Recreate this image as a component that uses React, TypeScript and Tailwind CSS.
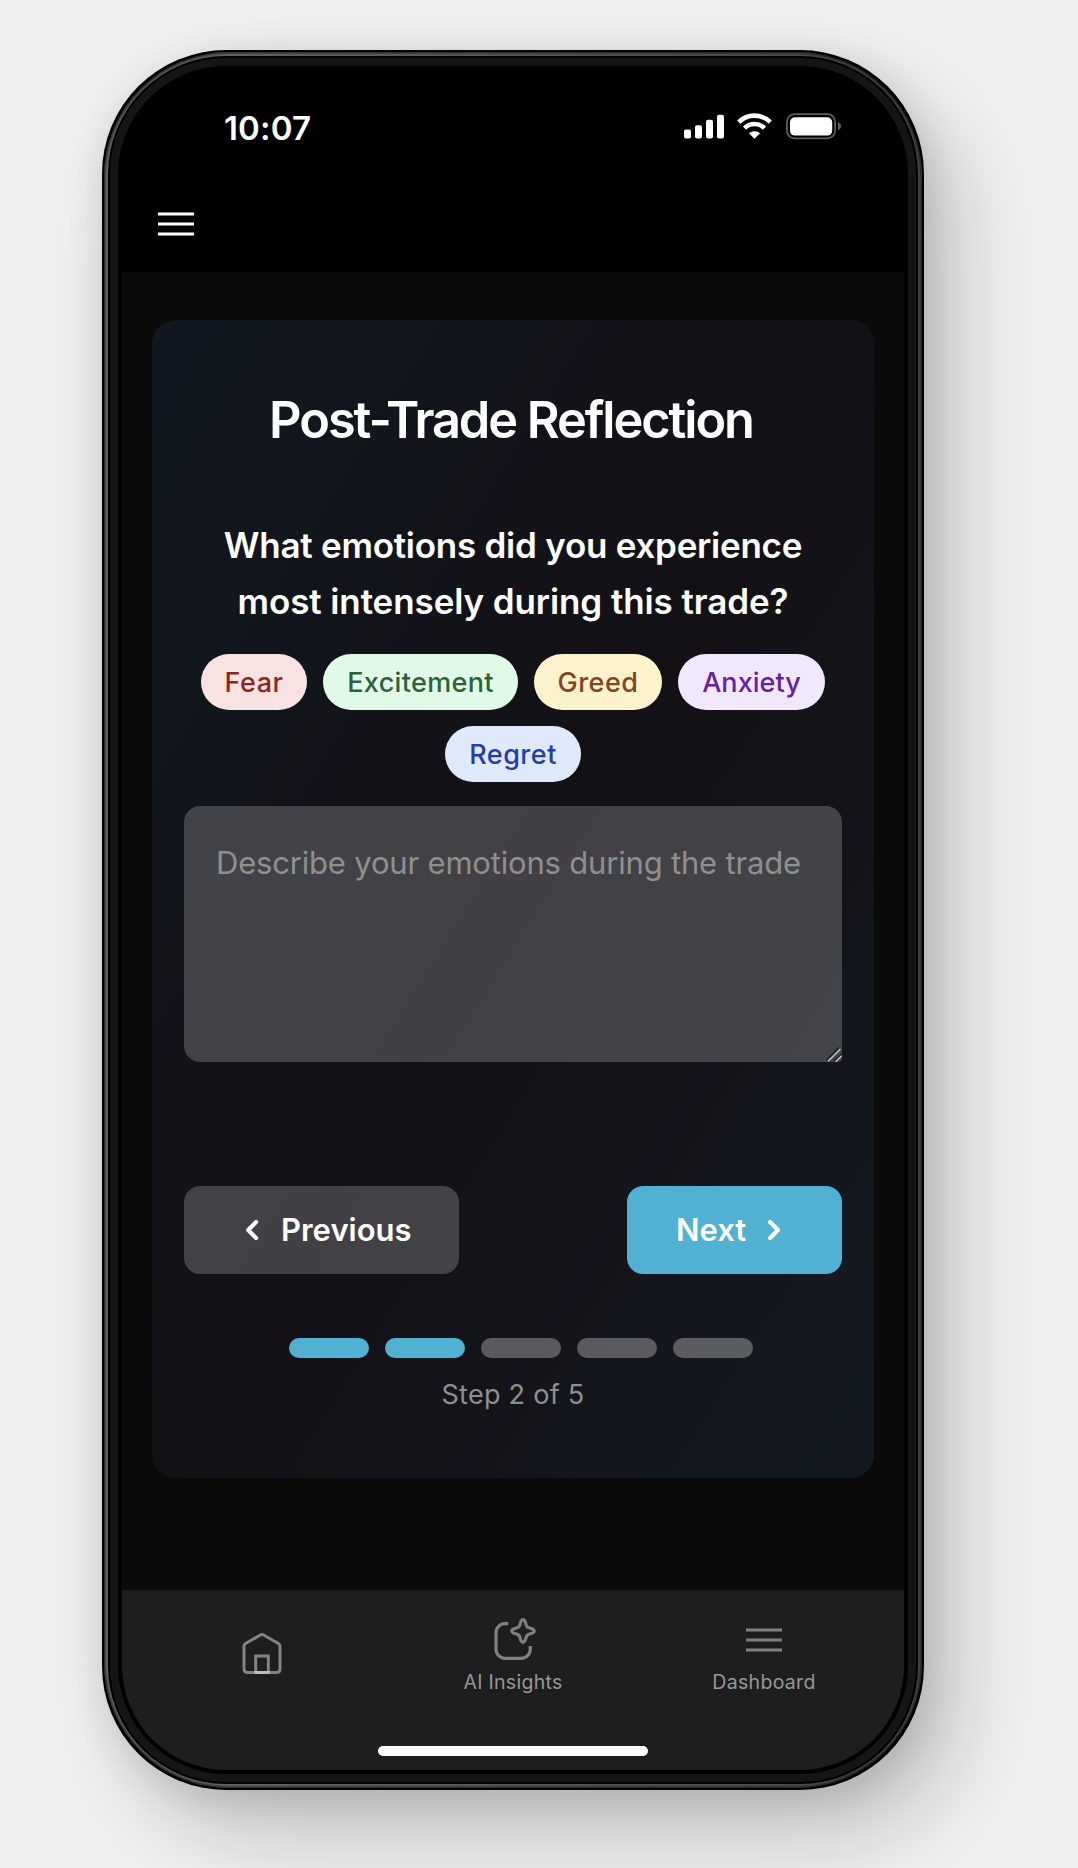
import type { ReactNode } from 'react';

const emotions = [
  { label: 'Fear', style: 'w-[106px] bg-[#f9e2e2] text-[#8e2620] tracking-[0.5px]' },
  { label: 'Excitement', style: 'w-[195px] bg-[#e1fae8] text-[#2c6339] tracking-[0.33px]' },
  { label: 'Greed', style: 'w-[128px] bg-[#fcf2cb] text-[#85431e] tracking-[0.5px]' },
  { label: 'Anxiety', style: 'w-[147px] bg-[#f2e8fd] text-[#6421a4] tracking-[0.05px]' },
  { label: 'Regret', style: 'w-[136px] bg-[#dee9fb] text-[#253eac] tracking-[0.5px]' },
];

const TOTAL_STEPS = 5;
const CURRENT_STEP = 2;

function MenuIcon({ className }: { className: string }) {
  return (
    <svg width="36" height="24" viewBox="0 0 36 24" stroke="currentColor" strokeWidth="3" className={className}>
      <path d="M0 2h36M0 12h36M0 22h36" />
    </svg>
  );
}

function HomeIcon() {
  return (
    <svg width="40" height="42" viewBox="0 0 40 42" fill="none" stroke="#fff" strokeOpacity="0.45" strokeWidth="3">
      <path
        d="M2 13.2c0-1.3.6-2 1.6-2.7L18.4 2c1.1-.7 2.1-.7 3.2 0l14.8 8.5c1 .7 1.6 1.4 1.6 2.7V36c0 2.200-1.300 3.400-3.400 3.400H5.400C3.300 39.400 2 38.200 2 36Z"
        strokeLinejoin="round"
      />
      <path d="M13.700 39.400V23h12.600v16.400Z" />
    </svg>
  );
}

function InsightsIcon() {
  return (
    <svg width="38" height="44" viewBox="0 0 38 44" fill="none" stroke="#7f7f7f" strokeWidth="3.2" className="overflow-visible">
      <path d="M14.300 6.700H11C6 6.700 2 10.700 2 15.700V32.300C2 37.300 6 41.300 11 41.300H27.300C32.300 41.300 36.300 37.300 36.300 32.300V29" />
      <path
        d="M27 4.300Q29 1.100 31 4.300L32.500 8.800Q33 10 34.200 10.500L38.700 12Q41.900 14 38.700 16L34.200 17.500Q33 18 32.500 19.200L31 23.700Q29 26.900 27 23.700L25.500 19.200Q25 18 23.800 17.500L19.300 16Q16.100 14 19.300 12L23.800 10.500Q25 10 25.500 8.800Z"
        strokeLinejoin="round"
      />
    </svg>
  );
}

function Chevron({ direction }: { direction: 'left' | 'right' }) {
  return (
    <svg width="40" height="40" viewBox="0 0 40 40" fill="none" stroke="currentColor" strokeWidth="4.2" strokeLinecap="round" strokeLinejoin="round">
      <path d={direction === 'left' ? 'M24.100 12l-7.900 8 7.900 8' : 'M16.100 12l7.900 8-7.900 8'} />
    </svg>
  );
}

function SignalIcon() {
  return (
    <svg width="40" height="26" viewBox="0 0 40 26" fill="#fff">
      <rect x="0" y="16.500" width="7" height="9" rx="2" />
      <rect x="11" y="12.300" width="7" height="13.200" rx="2" />
      <rect x="22" y="6.700" width="7" height="18.800" rx="2" />
      <rect x="33" y="1.800" width="7" height="23.700" rx="2" />
    </svg>
  );
}

function WifiIcon() {
  return (
    <svg width="35" height="26" viewBox="0 0 35 26" fill="none" stroke="#fff" strokeWidth="4.6">
      <path d="M1.700 9.100A22.600 22.600 0 0 1 33.300 9.100" />
      <path d="M7.500 15.100A14.400 14.400 0 0 1 27.500 15.100" />
      <path d="M17.500 25.700L11.900 20.300A8.300 8.300 0 0 1 23.100 20.300Z" fill="#fff" stroke="none" />
    </svg>
  );
}

function BatteryIcon() {
  return (
    <svg width="55" height="26" viewBox="0 0 55 26" fill="none" className="overflow-visible">
      <rect x="0.9" y="1.100" width="48.200" height="24.200" rx="7.600" stroke="#5e5e5e" strokeWidth="1.8" />
      <rect x="4" y="4.200" width="42.200" height="18.400" rx="5" fill="#fff" />
      <path d="M52 9c1.900.8 3 2.400 3 4.300s-1.100 3.500-3 4.300Z" fill="#5e5e5e" />
    </svg>
  );
}

function PhoneFrame({ children }: { children: ReactNode }) {
  return (
    <div className="h-[1740px] w-[822px] rounded-[124px] bg-black p-[2px] shadow-[32px_44px_90px_rgba(0,0,0,0.2),4px_8px_40px_rgba(0,0,0,0.12)]">
      <div className="h-full w-full rounded-[125px] bg-gradient-to-r from-[#6a6a6a] via-[#5a5a5a] to-[#484848] p-[4px] shadow-[inset_0_0_3px_1px_#111]">
        <div className="h-full w-full rounded-[118px] bg-black p-[2px]">
          <div className="h-full w-full rounded-[116px] bg-[#151515] p-[8px]">
            <div className="h-full w-full rounded-[108px] bg-black p-[4px]">
              <div className="flex h-full w-full flex-col overflow-hidden rounded-[104px] bg-[#0a0a0a]">{children}</div>
            </div>
          </div>
        </div>
      </div>
    </div>
  );
}

export default function App() {
  return (
    <div className="flex h-[1868px] w-[1078px] items-start overflow-hidden bg-[#f0f0f0] pl-[102px] pt-[50px] font-[Inter,'Liberation_Sans',sans-serif] antialiased">
      <PhoneFrame>
        <header className="flex h-[202px] shrink-0 flex-col bg-black">
          <div className="flex items-start justify-between pl-[102px] pr-[63px] pt-[38px]">
            <span className="text-[33px] font-semibold leading-10 tracking-[0.16px] text-white">10:07</span>
            <div className="flex gap-[13px] pt-[5px]">
              <SignalIcon />
              <div className="flex gap-[14px]">
                <WifiIcon />
                <BatteryIcon />
              </div>
            </div>
          </div>
          <button aria-label="Menu" className="ml-9 mt-16 self-start">
            <MenuIcon className="text-white" />
          </button>
        </header>

        <main className="flex-1 px-[30px] pt-12">
          <section className="h-[1158px] rounded-3xl bg-[linear-gradient(to_bottom_right,#111821,#131116_50%,#141a22)] px-8 pt-[70px]">
            <h1 className="pr-[4px] text-center text-[50.5px] font-semibold leading-[60px] tracking-[-2.08px] text-white">
              Post-Trade Reflection
            </h1>
            <h2 className="mt-[67px] text-center text-[35px] font-semibold leading-14 text-white">
              <span className="block tracking-[-0.25px]">What emotions did you experience</span>
              <span className="block tracking-[-0.1px]">most intensely during this trade?</span>
            </h2>
            <div className="mt-[25px] flex flex-wrap justify-center gap-4">
              {emotions.map(({ label, style }) => (
                <button key={label} className={`h-14 rounded-full pt-[2px] text-center text-[27px] font-medium ${style}`}>
                  {label}
                </button>
              ))}
            </div>
            <div className="relative mt-6 h-64">
              <textarea
                placeholder="Describe your emotions during the trade"
                className="block h-full w-full resize-none overflow-hidden rounded-2xl rounded-br-[4px] bg-white/20 pb-8 pl-8 pt-[33px] text-[31px] leading-12 tracking-[-0.185px] text-white outline-none placeholder:text-[#8f8f8f]"
              />
              <svg width="16" height="16" viewBox="0 0 16 16" className="pointer-events-none absolute bottom-0 right-0" fill="none">
                <path d="M.8 14L13 1.500M8 15.500L16 8" stroke="#1c1c1e" strokeWidth="1.5" />
                <path d="M2 15.200L14.500 3M9.500 15.800L15.800 9.800" stroke="#c9c9c9" strokeWidth="1.4" />
              </svg>
            </div>
            <div className="mt-[124px] flex justify-between text-[31px] font-semibold text-white">
              <button className="flex h-[88px] w-[275px] items-center gap-2 rounded-2xl bg-white/20 pl-12">
                <Chevron direction="left" />
                <span className="ml-px pt-px">Previous</span>
              </button>
              <button className="flex h-[88px] w-[215px] items-center gap-2 rounded-2xl bg-[#51b1d2] pl-12">
                <span className="ml-px pt-px">Next</span>
                <Chevron direction="right" />
              </button>
            </div>
            <div className="ml-4 mt-16 flex justify-center gap-4">
              {Array.from({ length: TOTAL_STEPS }, (_, i) => (
                <span key={i} className={`h-5 w-20 rounded-full ${i < CURRENT_STEP ? 'bg-[#51b1d2]' : 'bg-white/30'}`} />
              ))}
            </div>
            <p className="mt-[17px] text-center text-[27px] leading-10 tracking-[0.28px] text-[#8f8f8f]">
              Step {CURRENT_STEP} of {TOTAL_STEPS}
            </p>
          </section>
        </main>

        <nav className="flex h-[180px] shrink-0 flex-col items-center bg-[#1e1e1e]">
          <div className="grid h-[156px] grid-cols-[251px_251px_251px] text-[19.5px] leading-6 text-[#979797]">
            <a className="flex flex-col items-center pt-[43px]" aria-label="Home">
              <HomeIcon />
            </a>
            <a className="flex flex-col items-center pt-[27px]">
              <InsightsIcon />
              <span className="mt-[9px] tracking-[0.3px]">AI Insights</span>
            </a>
            <a className="flex flex-col items-center pt-[38px]">
              <MenuIcon className="text-[#7f7f7f]" />
              <span className="mt-[18px] tracking-[0.3px]">Dashboard</span>
            </a>
          </div>
          <div className="h-[10px] w-[270px] rounded-full bg-white" />
        </nav>
      </PhoneFrame>
    </div>
  );
}
